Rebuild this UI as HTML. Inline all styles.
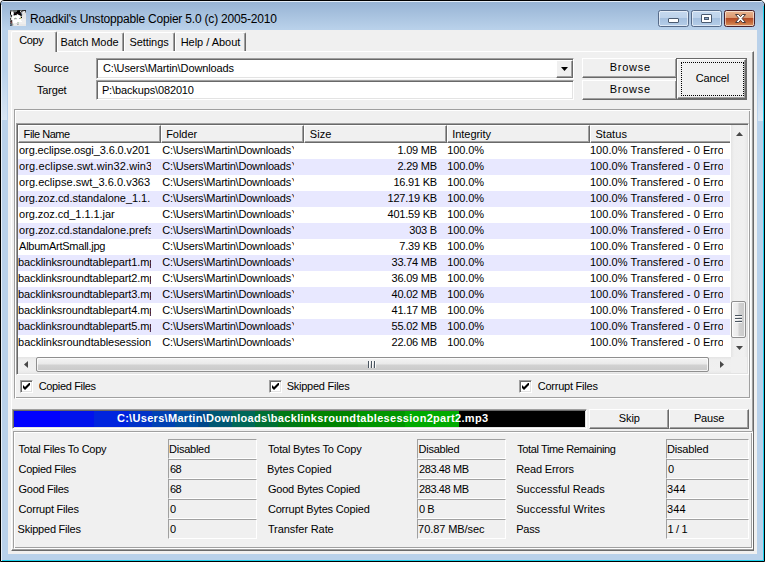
<!DOCTYPE html>
<html>
<head>
<meta charset="utf-8">
<title>Roadkil's Unstoppable Copier 5.0</title>
<style>
html,body{margin:0;padding:0;}
body{width:765px;height:562px;overflow:hidden;background:#fff;position:relative;
 font-family:"Liberation Sans",sans-serif;font-size:11px;color:#000;}
.a{position:absolute;box-sizing:border-box;}
.t{position:absolute;white-space:nowrap;line-height:13px;height:13px;}
#win{left:0;top:0;width:765px;height:562px;background:#b9d1ea;border:1px solid #000;
 border-radius:4px 5px 0 0;overflow:hidden;}
#titlegrad{left:0;top:0;width:763px;height:29px;background:linear-gradient(#98b4d4 0px,#9ab6d6 3px,#b9d1ea 28px);}
#hl{left:0;top:0;width:763px;height:1px;background:#e4edf7;}
#cyan{left:0;top:559px;width:763px;height:1px;background:#1fd2ee;}
#cyan2{left:762px;top:5px;width:1px;height:555px;background:#1fd2ee;}
#lwhite{left:0;top:4px;width:1px;height:556px;background:#e8f0f8;}
.glow{width:5px;background:linear-gradient(rgba(255,255,255,0),rgba(255,255,255,.45));}
#client{left:8px;top:30px;width:749px;height:524px;background:#f0f0f0;}
#title{font-size:12px;line-height:16px;height:16px;}
.cb{top:10px;width:31px;height:17px;border:1px solid #566a88;border-radius:2.5px;
 background:linear-gradient(#c5d9ef 0,#bed3eb 45%,#a5c0df 50%,#b5cde8 100%);box-shadow:inset 0 0 0 1px rgba(255,255,255,.55);}
#cbx{background:linear-gradient(#e9b48f 0,#dc9870 45%,#b54c27 50%,#c56a3a 75%,#dc9560 100%);border-color:#48202a;}
.btn{background:#f0f0f0;border:1px solid;border-color:#fff #696969 #696969 #fff;box-shadow:inset -1px -1px 0 #a0a0a0;}
.sunk{border:1px solid;border-color:#a0a0a0 #fff #fff #a0a0a0;box-shadow:inset 1px 1px 0 #696969, inset -1px -1px 0 #e3e3e3;background:#fff;}
.grp{border:1px solid;border-color:#a0a0a0 #fff #fff #a0a0a0;box-shadow:inset 1px 1px 0 #fff, inset -1px -1px 0 #a0a0a0;}
.val{border:1px solid;border-color:#a0a0a0 #fff #fff #a0a0a0;height:20px;}
.tab{border-left:1px solid #fff;border-top:1px solid #fff;border-right:1px solid #696969;box-shadow:inset -1px 0 0 #a0a0a0;background:#f0f0f0;border-radius:2px 2px 0 0;}
.hd{top:125px;height:18px;background:#f0f0f0;border:1px solid;border-color:#fff #696969 #696969 #fff;box-shadow:inset -1px -1px 0 #a0a0a0;}
.row{left:18px;width:712px;height:16px;}
.clip{position:absolute;overflow:hidden;height:16px;}
.chk{width:13px;height:13px;border:1px solid;border-color:#a0a0a0 #fff #fff #a0a0a0;box-shadow:inset 1px 1px 0 #696969, inset -1px -1px 0 #e3e3e3;background:#fff;}
</style>
</head>
<body>
<div id="win" class="a"><div id="titlegrad" class="a"></div><div id="hl" class="a"></div><div id="cyan" class="a"></div><div id="cyan2" class="a"></div><div id="lwhite" class="a"></div><div class="a glow" style="left:1px;top:68px;height:51px"></div><div class="a glow" style="left:757px;top:69px;height:51px"></div></div>
<svg class="a" style="left:10px;top:10px" width="16" height="16" viewBox="0 0 16 16" shape-rendering="crispEdges"><rect x="0" y="0" width="1" height="1" fill="#56626c"/><rect x="1" y="0" width="1" height="1" fill="#6a7074"/><rect x="2" y="0" width="1" height="1" fill="#787d82"/><rect x="3" y="0" width="4" height="1" fill="#5e6868"/><rect x="7" y="0" width="1" height="1" fill="#2a2a2a"/><rect x="8" y="0" width="2" height="1" fill="#111"/><rect x="10" y="0" width="1" height="1" fill="#5a5a5a"/><rect x="11" y="0" width="1" height="1" fill="#6a6a6a"/><rect x="12" y="0" width="2" height="1" fill="#2c2c2c"/><rect x="14" y="0" width="2" height="1" fill="#222"/><rect x="0" y="1" width="1" height="1" fill="#444"/><rect x="1" y="1" width="1" height="1" fill="#a4a4a4"/><rect x="2" y="1" width="1" height="1" fill="#b4b4b4"/><rect x="3" y="1" width="1" height="1" fill="#808484"/><rect x="4" y="1" width="2" height="1" fill="#6e7474"/><rect x="6" y="1" width="1" height="1" fill="#6a6a6a"/><rect x="7" y="1" width="3" height="1" fill="#000"/><rect x="10" y="1" width="1" height="1" fill="#d0d0d0"/><rect x="11" y="1" width="1" height="1" fill="#444"/><rect x="12" y="1" width="1" height="1" fill="#808080"/><rect x="13" y="1" width="1" height="1" fill="#c4c4c4"/><rect x="14" y="1" width="1" height="1" fill="#e8e8e8"/><rect x="15" y="1" width="1" height="1" fill="#555"/><rect x="0" y="2" width="1" height="1" fill="#000"/><rect x="1" y="2" width="1" height="1" fill="#eee"/><rect x="2" y="2" width="1" height="1" fill="#fff"/><rect x="3" y="2" width="1" height="1" fill="#aaa"/><rect x="4" y="2" width="2" height="1" fill="#333"/><rect x="6" y="2" width="4" height="1" fill="#000"/><rect x="10" y="2" width="1" height="1" fill="#333"/><rect x="11" y="2" width="1" height="1" fill="#999"/><rect x="12" y="2" width="1" height="1" fill="#ccc"/><rect x="13" y="2" width="1" height="1" fill="#f4f4f4"/><rect x="14" y="2" width="1" height="1" fill="#ddd"/><rect x="15" y="2" width="1" height="1" fill="#999"/><rect x="0" y="3" width="1" height="1" fill="#000"/><rect x="1" y="3" width="2" height="1" fill="#fff"/><rect x="3" y="3" width="1" height="1" fill="#ccc"/><rect x="4" y="3" width="7" height="1" fill="#1a0a10"/><rect x="11" y="3" width="1" height="1" fill="#678"/><rect x="12" y="3" width="1" height="1" fill="#ddd"/><rect x="13" y="3" width="3" height="1" fill="#e0e0e0"/><rect x="0" y="4" width="1" height="1" fill="#333"/><rect x="1" y="4" width="1" height="1" fill="#ddd"/><rect x="2" y="4" width="1" height="1" fill="#fff"/><rect x="3" y="4" width="1" height="1" fill="#89a"/><rect x="4" y="4" width="2" height="1" fill="#000"/><rect x="6" y="4" width="1" height="1" fill="#333"/><rect x="7" y="4" width="1" height="1" fill="#ccc"/><rect x="8" y="4" width="1" height="1" fill="#444"/><rect x="9" y="4" width="2" height="1" fill="#000"/><rect x="11" y="4" width="1" height="1" fill="#345"/><rect x="12" y="4" width="1" height="1" fill="#ccc"/><rect x="13" y="4" width="3" height="1" fill="#e4e4e4"/><rect x="0" y="5" width="1" height="1" fill="#888"/><rect x="1" y="5" width="1" height="1" fill="#333"/><rect x="2" y="5" width="1" height="1" fill="#ddd"/><rect x="3" y="5" width="1" height="1" fill="#ccc"/><rect x="4" y="5" width="1" height="1" fill="#999"/><rect x="5" y="5" width="2" height="1" fill="#ddd"/><rect x="7" y="5" width="2" height="1" fill="#fff"/><rect x="9" y="5" width="1" height="1" fill="#ccc"/><rect x="10" y="5" width="1" height="1" fill="#444"/><rect x="11" y="5" width="1" height="1" fill="#333"/><rect x="12" y="5" width="1" height="1" fill="#ddd"/><rect x="13" y="5" width="3" height="1" fill="#e8e8e8"/><rect x="0" y="6" width="1" height="1" fill="#9ab"/><rect x="1" y="6" width="1" height="1" fill="#444"/><rect x="2" y="6" width="1" height="1" fill="#eee"/><rect x="3" y="6" width="7" height="1" fill="#fff"/><rect x="10" y="6" width="1" height="1" fill="#ccc"/><rect x="11" y="6" width="1" height="1" fill="#999"/><rect x="12" y="6" width="4" height="1" fill="#e8e8e8"/><rect x="0" y="7" width="1" height="1" fill="#bbb"/><rect x="1" y="7" width="1" height="1" fill="#ccc"/><rect x="2" y="7" width="3" height="1" fill="#fff"/><rect x="5" y="7" width="1" height="1" fill="#dfd"/><rect x="6" y="7" width="4" height="1" fill="#fff"/><rect x="10" y="7" width="1" height="1" fill="#d4d49a"/><rect x="11" y="7" width="1" height="1" fill="#000"/><rect x="12" y="7" width="1" height="1" fill="#eee"/><rect x="13" y="7" width="3" height="1" fill="#e8e8e8"/><rect x="0" y="8" width="1" height="1" fill="#444"/><rect x="1" y="8" width="1" height="1" fill="#ddd"/><rect x="2" y="8" width="2" height="1" fill="#fff"/><rect x="4" y="8" width="1" height="1" fill="#aaa"/><rect x="5" y="8" width="1" height="1" fill="#9aa294"/><rect x="6" y="8" width="1" height="1" fill="#bbb"/><rect x="7" y="8" width="2" height="1" fill="#fff"/><rect x="9" y="8" width="1" height="1" fill="#99a"/><rect x="10" y="8" width="1" height="1" fill="#c4c468"/><rect x="11" y="8" width="1" height="1" fill="#ddd"/><rect x="12" y="8" width="4" height="1" fill="#e8e8e8"/><rect x="0" y="9" width="1" height="1" fill="#555"/><rect x="1" y="9" width="1" height="1" fill="#ddd"/><rect x="2" y="9" width="2" height="1" fill="#fff"/><rect x="4" y="9" width="1" height="1" fill="#ddd"/><rect x="5" y="9" width="2" height="1" fill="#eee"/><rect x="7" y="9" width="4" height="1" fill="#fff"/><rect x="11" y="9" width="5" height="1" fill="#eee"/><rect x="0" y="10" width="1" height="1" fill="#777"/><rect x="1" y="10" width="1" height="1" fill="#444"/><rect x="2" y="10" width="1" height="1" fill="#ccc"/><rect x="3" y="10" width="8" height="1" fill="#fff"/><rect x="11" y="10" width="5" height="1" fill="#eee"/><rect x="0" y="11" width="1" height="1" fill="#444"/><rect x="1" y="11" width="1" height="1" fill="#4a2a2a"/><rect x="2" y="11" width="1" height="1" fill="#ccc"/><rect x="3" y="11" width="9" height="1" fill="#fff"/><rect x="12" y="11" width="4" height="1" fill="#eee"/><rect x="0" y="12" width="1" height="1" fill="#667"/><rect x="1" y="12" width="1" height="1" fill="#8a4444"/><rect x="2" y="12" width="1" height="1" fill="#bbb"/><rect x="3" y="12" width="4" height="1" fill="#fff"/><rect x="7" y="12" width="1" height="1" fill="#ccc"/><rect x="8" y="12" width="1" height="1" fill="#bdb"/><rect x="9" y="12" width="7" height="1" fill="#eee"/><rect x="0" y="13" width="1" height="1" fill="#555"/><rect x="1" y="13" width="1" height="1" fill="#666"/><rect x="2" y="13" width="1" height="1" fill="#aaa"/><rect x="3" y="13" width="3" height="1" fill="#eee"/><rect x="6" y="13" width="1" height="1" fill="#ddd"/><rect x="7" y="13" width="2" height="1" fill="#ccc"/><rect x="9" y="13" width="7" height="1" fill="#eee"/><rect x="0" y="14" width="1" height="1" fill="#678"/><rect x="1" y="14" width="1" height="1" fill="#567"/><rect x="2" y="14" width="1" height="1" fill="#999"/><rect x="3" y="14" width="1" height="1" fill="#cdc"/><rect x="4" y="14" width="3" height="1" fill="#eee"/><rect x="7" y="14" width="1" height="1" fill="#aaa"/><rect x="8" y="14" width="1" height="1" fill="#bbb"/><rect x="9" y="14" width="1" height="1" fill="#eee"/><rect x="10" y="14" width="6" height="1" fill="#e8e8e8"/><rect x="0" y="15" width="1" height="1" fill="#456"/><rect x="1" y="15" width="1" height="1" fill="#567"/><rect x="2" y="15" width="1" height="1" fill="#aaa"/><rect x="3" y="15" width="1" height="1" fill="#ddd"/><rect x="4" y="15" width="12" height="1" fill="#e8e8e8"/></svg>
<div class="t" id="title" style="left:30.00px;top:11px;letter-spacing:-0.198px;">Roadkil's Unstoppable Copier 5.0 (c) 2005-2010</div>
<div class="a cb" style="left:658px"><div class="a" style="left:9px;top:7px;width:11px;height:5px;background:#fff;border:1px solid #4a5a70;border-radius:1px"></div></div>
<div class="a cb" style="left:691px"><div class="a" style="left:9px;top:3px;width:11px;height:9px;background:#fff;border:1px solid #4a5a70;border-radius:1px"></div><div class="a" style="left:12px;top:6px;width:5px;height:3px;background:#8aa4c4;border:1px solid #4a5a70"></div></div>
<div class="a cb" id="cbx" style="left:724px"><svg class="a" style="left:8.5px;top:2px" width="13" height="11" viewBox="0 0 13 11"><path d="M1.5 1.5h3.1l1.9 2.2 1.9-2.2h3.1l-3.4 4 3.4 4h-3.1l-1.9-2.2-1.9 2.2h-3.1l3.4-4z" fill="#fff" stroke="#4a3a3a" stroke-width="1"/></svg></div>
<div id="client" class="a"></div>
<div class="a" style="left:11px;top:51px;width:743px;height:500px;border:1px solid;border-color:#fff #696969 #696969 #fff;box-shadow:inset -1px -1px 0 #a0a0a0"></div>
<div class="a tab" style="left:57px;top:32px;width:67px;height:19px"></div>
<div class="a tab" style="left:124px;top:32px;width:51px;height:19px"></div>
<div class="a tab" style="left:175px;top:32px;width:71px;height:19px"></div>
<div class="a tab" style="left:11px;top:31px;width:46px;height:21px"></div>
<div class="t" style="left:19.30px;top:34px;letter-spacing:-0.433px;">Copy</div>
<div class="t" style="left:60.40px;top:36px;letter-spacing:-0.056px;">Batch Mode</div>
<div class="t" style="left:129.40px;top:36px;letter-spacing:-0.057px;">Settings</div>
<div class="t" style="left:180.70px;top:36px;letter-spacing:-0.027px;">Help / About</div>
<div class="t" style="left:33.80px;top:62px;letter-spacing:0.020px;">Source</div>
<div class="t" style="left:37.00px;top:84px;letter-spacing:-0.180px;">Target</div>
<div class="a sunk" style="left:96px;top:58px;width:478px;height:21px"><div class="a btn" style="left:459px;top:1px;width:17px;height:18px"><svg class="a" style="left:4px;top:6px" width="7" height="4" viewBox="0 0 7 4"><path d="M0 0h7l-3.5 4z" fill="#000"/></svg></div></div>
<div class="t" style="left:102.90px;top:62px;letter-spacing:-0.112px;">C:\Users\Martin\Downloads</div>
<div class="a sunk" style="left:96px;top:80px;width:478px;height:20px"></div>
<div class="t" style="left:101.90px;top:84px;letter-spacing:-0.131px;">P:\backups\082010</div>
<div class="a btn" style="left:582px;top:58px;width:95px;height:20px"></div><div class="t" style="left:609.80px;top:61px;letter-spacing:0.720px;">Browse</div>
<div class="a btn" style="left:582px;top:80px;width:95px;height:20px"></div><div class="t" style="left:609.80px;top:83px;letter-spacing:0.720px;">Browse</div>
<div class="a" style="left:676px;top:58px;width:71px;height:42px;border:1px solid #696969;background:#f0f0f0"><div class="a" style="left:0;top:0;width:69px;height:40px;border:1px solid;border-color:#fff #696969 #696969 #fff;box-shadow:inset -1px -1px 0 #a0a0a0"></div><div class="a" style="left:4px;top:3px;width:63px;height:34px;border:1px dotted #000"></div></div>
<div class="t" style="left:695.70px;top:72px;letter-spacing:-0.140px;">Cancel</div>
<div class="a grp" style="left:14px;top:109px;width:737px;height:290px"></div>
<div class="a sunk" style="left:16px;top:123px;width:733px;height:252px"></div>
<div class="a hd" style="left:18px;width:143px"></div>
<div class="t" style="left:23.60px;top:128px;letter-spacing:-0.438px;">File Name</div>
<div class="a hd" style="left:161px;width:143px"></div>
<div class="t" style="left:166.20px;top:128px;letter-spacing:-0.040px;">Folder</div>
<div class="a hd" style="left:304px;width:143px"></div>
<div class="t" style="left:309.80px;top:128px;letter-spacing:0.067px;">Size</div>
<div class="a hd" style="left:447px;width:143px"></div>
<div class="t" style="left:452.30px;top:128px;letter-spacing:-0.062px;">Integrity</div>
<div class="a hd" style="left:590px;width:140px;border-right:none;box-shadow:inset 0 -1px 0 #a0a0a0"></div>
<div class="t" style="left:595.40px;top:128px;letter-spacing:0.060px;">Status</div>
<div class="a row" style="top:143px;background:#fff"><div class="clip" style="left:0;top:0;width:133px"><div class="t" style="left:1.10px;top:1px;letter-spacing:-0.115px;">org.eclipse.osgi_3.6.0.v201</div></div><div class="clip" style="left:143px;top:0;width:133.3px"><div class="t" style="left:1.30px;top:1px;letter-spacing:-0.208px;">C:\Users\Martin\Downloads<span style="display:inline-block;transform:skewX(18deg);transform-origin:0 2px;margin-left:0.6px">\</span></div></div><div class="t" style="right:293.1px;top:1px;letter-spacing:-0.22px">1.09 MB</div><div class="t" style="left:429.20px;top:1px;letter-spacing:-0.100px;">100.0%</div><div class="clip" style="left:572px;top:0;width:133.4px"><div class="t" style="left:-0.10px;top:1px;letter-spacing:0.052px;">100.0% Transfered - 0 Errors</div></div></div>
<div class="a row" style="top:159px;background:#e8e8ff"><div class="clip" style="left:0;top:0;width:133px"><div class="t" style="left:1.10px;top:1px;letter-spacing:0.112px;">org.eclipse.swt.win32.win32</div></div><div class="clip" style="left:143px;top:0;width:133.3px"><div class="t" style="left:1.30px;top:1px;letter-spacing:-0.208px;">C:\Users\Martin\Downloads<span style="display:inline-block;transform:skewX(18deg);transform-origin:0 2px;margin-left:0.6px">\</span></div></div><div class="t" style="right:293.1px;top:1px;letter-spacing:-0.22px">2.29 MB</div><div class="t" style="left:429.20px;top:1px;letter-spacing:-0.100px;">100.0%</div><div class="clip" style="left:572px;top:0;width:133.4px"><div class="t" style="left:-0.10px;top:1px;letter-spacing:0.052px;">100.0% Transfered - 0 Errors</div></div></div>
<div class="a row" style="top:175px;background:#fff"><div class="clip" style="left:0;top:0;width:133px"><div class="t" style="left:1.10px;top:1px;letter-spacing:0.032px;">org.eclipse.swt_3.6.0.v363</div></div><div class="clip" style="left:143px;top:0;width:133.3px"><div class="t" style="left:1.30px;top:1px;letter-spacing:-0.208px;">C:\Users\Martin\Downloads<span style="display:inline-block;transform:skewX(18deg);transform-origin:0 2px;margin-left:0.6px">\</span></div></div><div class="t" style="right:293.1px;top:1px;letter-spacing:-0.22px">16.91 KB</div><div class="t" style="left:429.20px;top:1px;letter-spacing:-0.100px;">100.0%</div><div class="clip" style="left:572px;top:0;width:133.4px"><div class="t" style="left:-0.10px;top:1px;letter-spacing:0.052px;">100.0% Transfered - 0 Errors</div></div></div>
<div class="a row" style="top:191px;background:#e8e8ff"><div class="clip" style="left:0;top:0;width:133px"><div class="t" style="left:1.10px;top:1px;letter-spacing:-0.040px;">org.zoz.cd.standalone_1.1.</div></div><div class="clip" style="left:143px;top:0;width:133.3px"><div class="t" style="left:1.30px;top:1px;letter-spacing:-0.208px;">C:\Users\Martin\Downloads<span style="display:inline-block;transform:skewX(18deg);transform-origin:0 2px;margin-left:0.6px">\</span></div></div><div class="t" style="right:293.1px;top:1px;letter-spacing:-0.22px">127.19 KB</div><div class="t" style="left:429.20px;top:1px;letter-spacing:-0.100px;">100.0%</div><div class="clip" style="left:572px;top:0;width:133.4px"><div class="t" style="left:-0.10px;top:1px;letter-spacing:0.052px;">100.0% Transfered - 0 Errors</div></div></div>
<div class="a row" style="top:207px;background:#fff"><div class="clip" style="left:0;top:0;width:133px"><div class="t" style="left:1.10px;top:1px;letter-spacing:-0.058px;">org.zoz.cd_1.1.1.jar</div></div><div class="clip" style="left:143px;top:0;width:133.3px"><div class="t" style="left:1.30px;top:1px;letter-spacing:-0.208px;">C:\Users\Martin\Downloads<span style="display:inline-block;transform:skewX(18deg);transform-origin:0 2px;margin-left:0.6px">\</span></div></div><div class="t" style="right:293.1px;top:1px;letter-spacing:-0.22px">401.59 KB</div><div class="t" style="left:429.20px;top:1px;letter-spacing:-0.100px;">100.0%</div><div class="clip" style="left:572px;top:0;width:133.4px"><div class="t" style="left:-0.10px;top:1px;letter-spacing:0.052px;">100.0% Transfered - 0 Errors</div></div></div>
<div class="a row" style="top:223px;background:#e8e8ff"><div class="clip" style="left:0;top:0;width:133px"><div class="t" style="left:1.10px;top:1px;letter-spacing:-0.036px;">org.zoz.cd.standalone.prefs</div></div><div class="clip" style="left:143px;top:0;width:133.3px"><div class="t" style="left:1.30px;top:1px;letter-spacing:-0.208px;">C:\Users\Martin\Downloads<span style="display:inline-block;transform:skewX(18deg);transform-origin:0 2px;margin-left:0.6px">\</span></div></div><div class="t" style="right:293.1px;top:1px;letter-spacing:-0.22px">303 B</div><div class="t" style="left:429.20px;top:1px;letter-spacing:-0.100px;">100.0%</div><div class="clip" style="left:572px;top:0;width:133.4px"><div class="t" style="left:-0.10px;top:1px;letter-spacing:0.052px;">100.0% Transfered - 0 Errors</div></div></div>
<div class="a row" style="top:239px;background:#fff"><div class="clip" style="left:0;top:0;width:133px"><div class="t" style="left:1.10px;top:1px;letter-spacing:-0.256px;">AlbumArtSmall.jpg</div></div><div class="clip" style="left:143px;top:0;width:133.3px"><div class="t" style="left:1.30px;top:1px;letter-spacing:-0.208px;">C:\Users\Martin\Downloads<span style="display:inline-block;transform:skewX(18deg);transform-origin:0 2px;margin-left:0.6px">\</span></div></div><div class="t" style="right:293.1px;top:1px;letter-spacing:-0.22px">7.39 KB</div><div class="t" style="left:429.20px;top:1px;letter-spacing:-0.100px;">100.0%</div><div class="clip" style="left:572px;top:0;width:133.4px"><div class="t" style="left:-0.10px;top:1px;letter-spacing:0.052px;">100.0% Transfered - 0 Errors</div></div></div>
<div class="a row" style="top:255px;background:#e8e8ff"><div class="clip" style="left:0;top:0;width:133px"><div class="t" style="left:0.10px;top:1px;letter-spacing:-0.132px;">backlinksroundtablepart1.mp3</div></div><div class="clip" style="left:143px;top:0;width:133.3px"><div class="t" style="left:1.30px;top:1px;letter-spacing:-0.208px;">C:\Users\Martin\Downloads<span style="display:inline-block;transform:skewX(18deg);transform-origin:0 2px;margin-left:0.6px">\</span></div></div><div class="t" style="right:293.1px;top:1px;letter-spacing:-0.22px">33.74 MB</div><div class="t" style="left:429.20px;top:1px;letter-spacing:-0.100px;">100.0%</div><div class="clip" style="left:572px;top:0;width:133.4px"><div class="t" style="left:-0.10px;top:1px;letter-spacing:0.052px;">100.0% Transfered - 0 Errors</div></div></div>
<div class="a row" style="top:271px;background:#fff"><div class="clip" style="left:0;top:0;width:133px"><div class="t" style="left:0.10px;top:1px;letter-spacing:-0.132px;">backlinksroundtablepart2.mp3</div></div><div class="clip" style="left:143px;top:0;width:133.3px"><div class="t" style="left:1.30px;top:1px;letter-spacing:-0.208px;">C:\Users\Martin\Downloads<span style="display:inline-block;transform:skewX(18deg);transform-origin:0 2px;margin-left:0.6px">\</span></div></div><div class="t" style="right:293.1px;top:1px;letter-spacing:-0.22px">36.09 MB</div><div class="t" style="left:429.20px;top:1px;letter-spacing:-0.100px;">100.0%</div><div class="clip" style="left:572px;top:0;width:133.4px"><div class="t" style="left:-0.10px;top:1px;letter-spacing:0.052px;">100.0% Transfered - 0 Errors</div></div></div>
<div class="a row" style="top:287px;background:#e8e8ff"><div class="clip" style="left:0;top:0;width:133px"><div class="t" style="left:0.10px;top:1px;letter-spacing:-0.132px;">backlinksroundtablepart3.mp3</div></div><div class="clip" style="left:143px;top:0;width:133.3px"><div class="t" style="left:1.30px;top:1px;letter-spacing:-0.208px;">C:\Users\Martin\Downloads<span style="display:inline-block;transform:skewX(18deg);transform-origin:0 2px;margin-left:0.6px">\</span></div></div><div class="t" style="right:293.1px;top:1px;letter-spacing:-0.22px">40.02 MB</div><div class="t" style="left:429.20px;top:1px;letter-spacing:-0.100px;">100.0%</div><div class="clip" style="left:572px;top:0;width:133.4px"><div class="t" style="left:-0.10px;top:1px;letter-spacing:0.052px;">100.0% Transfered - 0 Errors</div></div></div>
<div class="a row" style="top:303px;background:#fff"><div class="clip" style="left:0;top:0;width:133px"><div class="t" style="left:0.10px;top:1px;letter-spacing:-0.132px;">backlinksroundtablepart4.mp3</div></div><div class="clip" style="left:143px;top:0;width:133.3px"><div class="t" style="left:1.30px;top:1px;letter-spacing:-0.208px;">C:\Users\Martin\Downloads<span style="display:inline-block;transform:skewX(18deg);transform-origin:0 2px;margin-left:0.6px">\</span></div></div><div class="t" style="right:293.1px;top:1px;letter-spacing:-0.22px">41.17 MB</div><div class="t" style="left:429.20px;top:1px;letter-spacing:-0.100px;">100.0%</div><div class="clip" style="left:572px;top:0;width:133.4px"><div class="t" style="left:-0.10px;top:1px;letter-spacing:0.052px;">100.0% Transfered - 0 Errors</div></div></div>
<div class="a row" style="top:319px;background:#e8e8ff"><div class="clip" style="left:0;top:0;width:133px"><div class="t" style="left:0.10px;top:1px;letter-spacing:-0.132px;">backlinksroundtablepart5.mp3</div></div><div class="clip" style="left:143px;top:0;width:133.3px"><div class="t" style="left:1.30px;top:1px;letter-spacing:-0.208px;">C:\Users\Martin\Downloads<span style="display:inline-block;transform:skewX(18deg);transform-origin:0 2px;margin-left:0.6px">\</span></div></div><div class="t" style="right:293.1px;top:1px;letter-spacing:-0.22px">55.02 MB</div><div class="t" style="left:429.20px;top:1px;letter-spacing:-0.100px;">100.0%</div><div class="clip" style="left:572px;top:0;width:133.4px"><div class="t" style="left:-0.10px;top:1px;letter-spacing:0.052px;">100.0% Transfered - 0 Errors</div></div></div>
<div class="a row" style="top:335px;background:#fff"><div class="clip" style="left:0;top:0;width:133px"><div class="t" style="left:0.10px;top:1px;letter-spacing:-0.060px;">backlinksroundtablesession</div></div><div class="clip" style="left:143px;top:0;width:133.3px"><div class="t" style="left:1.30px;top:1px;letter-spacing:-0.208px;">C:\Users\Martin\Downloads<span style="display:inline-block;transform:skewX(18deg);transform-origin:0 2px;margin-left:0.6px">\</span></div></div><div class="t" style="right:293.1px;top:1px;letter-spacing:-0.22px">22.06 MB</div><div class="t" style="left:429.20px;top:1px;letter-spacing:-0.100px;">100.0%</div><div class="clip" style="left:572px;top:0;width:133.4px"><div class="t" style="left:-0.10px;top:1px;letter-spacing:0.052px;">100.0% Transfered - 0 Errors</div></div></div>
<div class="a" style="left:731px;top:125px;width:16px;height:232px;background:linear-gradient(90deg,#e4e4e4,#efefef 3px,#f0f0f0 13px,#e9e9e9)"></div>
<svg class="a" style="left:736px;top:132px" width="7" height="4" viewBox="0 0 7 4"><path d="M0 4h7l-3.5-4z" fill="#484848"/></svg>
<svg class="a" style="left:736px;top:346px" width="7" height="4" viewBox="0 0 7 4"><path d="M0 0h7l-3.5 4z" fill="#484848"/></svg>
<div class="a" style="left:731px;top:301px;width:15px;height:37px;border:1px solid #8f8f8f;border-radius:2px;background:linear-gradient(90deg,#f4f4f4,#e9e9e9 48%,#d2d2d2 52%,#c9c9c9);box-shadow:inset 0 0 0 1px rgba(255,255,255,.75)"><div class="a" style="left:3px;top:13px;width:7px;height:2px;background:linear-gradient(#4a5560 50%,#fafafa 50%)"></div><div class="a" style="left:3px;top:16px;width:7px;height:2px;background:linear-gradient(#4a5560 50%,#fafafa 50%)"></div><div class="a" style="left:3px;top:19px;width:7px;height:2px;background:linear-gradient(#4a5560 50%,#fafafa 50%)"></div></div>
<div class="a" style="left:18px;top:357px;width:713px;height:16px;background:linear-gradient(#e4e4e4,#efefef 3px,#f0f0f0 13px,#e9e9e9)"></div>
<div class="a" style="left:731px;top:357px;width:16px;height:16px;background:#f0f0f0"></div>
<svg class="a" style="left:24px;top:361px" width="4" height="7" viewBox="0 0 4 7"><path d="M4 0v7l-4-3.5z" fill="#484848"/></svg>
<svg class="a" style="left:720px;top:361px" width="4" height="7" viewBox="0 0 4 7"><path d="M0 0v7l4-3.5z" fill="#484848"/></svg>
<div class="a" style="left:36px;top:357px;width:673px;height:15px;border:1px solid #8f8f8f;border-radius:2px;background:linear-gradient(#f4f4f4,#e9e9e9 48%,#d2d2d2 52%,#c9c9c9);box-shadow:inset 0 0 0 1px rgba(255,255,255,.75)"><div class="a" style="left:331px;top:3px;width:2px;height:7px;background:linear-gradient(90deg,#4a5560 50%,#fafafa 50%)"></div><div class="a" style="left:334px;top:3px;width:2px;height:7px;background:linear-gradient(90deg,#4a5560 50%,#fafafa 50%)"></div><div class="a" style="left:337px;top:3px;width:2px;height:7px;background:linear-gradient(90deg,#4a5560 50%,#fafafa 50%)"></div></div>
<div class="a chk" style="left:20px;top:380px"><svg class="a" style="left:2px;top:2px" width="7" height="7" viewBox="0 0 7 7"><path d="M0 2v3l2 2 5-5v-3l-5 5z" fill="#000"/></svg></div><div class="t" style="left:38.70px;top:380px;letter-spacing:-0.345px;">Copied Files</div>
<div class="a chk" style="left:269px;top:380px"><svg class="a" style="left:2px;top:2px" width="7" height="7" viewBox="0 0 7 7"><path d="M0 2v3l2 2 5-5v-3l-5 5z" fill="#000"/></svg></div><div class="t" style="left:286.70px;top:380px;letter-spacing:-0.250px;">Skipped Files</div>
<div class="a chk" style="left:519px;top:380px"><svg class="a" style="left:2px;top:2px" width="7" height="7" viewBox="0 0 7 7"><path d="M0 2v3l2 2 5-5v-3l-5 5z" fill="#000"/></svg></div><div class="t" style="left:537.70px;top:380px;letter-spacing:-0.225px;">Corrupt Files</div>
<div class="a" style="left:12px;top:409px;width:575px;height:20px;border:1px solid;border-color:#a0a0a0 #fff #fff #a0a0a0;box-shadow:inset 1px 1px 0 #696969, inset -1px -1px 0 #e3e3e3;background:#000"><div class="a" style="left:1px;top:1px;width:445px;height:16px;background:linear-gradient(90deg,rgb(0,0,255) 0px,rgb(0,0,255) 46px,rgb(0,18,237) 46px,rgb(0,18,237) 80px,rgb(0,36,222) 80px,rgb(0,36,222) 115px,rgb(0,50,200) 115px,rgb(0,50,200) 138px,rgb(0,65,180) 138px,rgb(0,65,180) 161px,rgb(0,78,158) 161px,rgb(0,78,158) 184px,rgb(0,72,138) 184px,rgb(0,72,138) 195px,rgb(0,88,115) 195px,rgb(0,88,115) 218px,rgb(0,104,88) 218px,rgb(0,104,88) 241px,rgb(0,112,52) 241px,rgb(0,112,52) 264px,rgb(0,122,20) 264px,rgb(0,122,20) 287px,rgb(0,132,0) 287px,rgb(0,132,0) 344px,rgb(0,150,0) 344px,rgb(0,150,0) 391px,rgb(0,170,0) 391px,rgb(0,170,0) 445px)"></div></div>
<div class="t" style="left:116.90px;top:412px;letter-spacing:0.303px;color:#fff;font-weight:bold;">C:\Users\Martin\Downloads\backlinksroundtablesession2part2.mp3</div>
<div class="a btn" style="left:589px;top:409px;width:80px;height:20px"></div><div class="t" style="left:618.70px;top:412px;letter-spacing:-0.033px;">Skip</div>
<div class="a btn" style="left:669px;top:409px;width:80px;height:20px"></div><div class="t" style="left:693.90px;top:412px;letter-spacing:-0.150px;">Pause</div>
<div class="a grp" style="left:13px;top:431px;width:740px;height:118px"></div>
<div class="t" style="left:18.60px;top:443px;letter-spacing:-0.267px;">Total Files To Copy</div><div class="a val" style="left:168px;top:439px;width:89px"></div><div class="t" style="left:169.10px;top:443px;letter-spacing:-0.257px;">Disabled</div>
<div class="t" style="left:18.60px;top:463px;letter-spacing:-0.309px;">Copied Files</div><div class="a val" style="left:168px;top:459px;width:89px"></div><div class="t" style="left:170.10px;top:463px;letter-spacing:-0.800px;">68</div>
<div class="t" style="left:18.60px;top:483px;letter-spacing:-0.311px;">Good Files</div><div class="a val" style="left:168px;top:479px;width:89px"></div><div class="t" style="left:170.10px;top:483px;letter-spacing:-0.800px;">68</div>
<div class="t" style="left:18.60px;top:503px;letter-spacing:-0.217px;">Corrupt Files</div><div class="a val" style="left:168px;top:499px;width:89px"></div><div class="t" style="left:170.10px;top:503px;letter-spacing:0.000px;">0</div>
<div class="t" style="left:17.60px;top:523px;letter-spacing:-0.225px;">Skipped Files</div><div class="a val" style="left:168px;top:519px;width:89px"></div><div class="t" style="left:170.10px;top:523px;letter-spacing:0.000px;">0</div>
<div class="t" style="left:267.90px;top:443px;letter-spacing:-0.178px;">Total Bytes To Copy</div><div class="a val" style="left:417px;top:439px;width:89px"></div><div class="t" style="left:418.60px;top:443px;letter-spacing:-0.257px;">Disabled</div>
<div class="t" style="left:266.90px;top:463px;letter-spacing:-0.064px;">Bytes Copied</div><div class="a val" style="left:417px;top:459px;width:89px"></div><div class="t" style="left:419.10px;top:463px;letter-spacing:-0.413px;">283.48 MB</div>
<div class="t" style="left:267.90px;top:483px;letter-spacing:-0.194px;">Good Bytes Copied</div><div class="a val" style="left:417px;top:479px;width:89px"></div><div class="t" style="left:419.10px;top:483px;letter-spacing:-0.413px;">283.48 MB</div>
<div class="t" style="left:267.90px;top:503px;letter-spacing:-0.168px;">Corrupt Bytes Copied</div><div class="a val" style="left:417px;top:499px;width:89px"></div><div class="t" style="left:419.10px;top:503px;letter-spacing:-0.550px;">0 B</div>
<div class="t" style="left:267.90px;top:523px;letter-spacing:-0.083px;">Transfer Rate</div><div class="a val" style="left:417px;top:519px;width:89px"></div><div class="t" style="left:418.10px;top:523px;letter-spacing:-0.082px;">70.87 MB/sec</div>
<div class="t" style="left:517.20px;top:443px;letter-spacing:-0.374px;">Total Time Remaining</div><div class="a val" style="left:666px;top:439px;width:83px"></div><div class="t" style="left:667.00px;top:443px;letter-spacing:-0.171px;">Disabled</div>
<div class="t" style="left:516.20px;top:463px;letter-spacing:-0.140px;">Read Errors</div><div class="a val" style="left:666px;top:459px;width:83px"></div><div class="t" style="left:668.00px;top:463px;letter-spacing:0.000px;">0</div>
<div class="t" style="left:516.20px;top:483px;letter-spacing:0.033px;">Successful Reads</div><div class="a val" style="left:666px;top:479px;width:83px"></div><div class="t" style="left:667.00px;top:483px;letter-spacing:0.100px;">344</div>
<div class="t" style="left:516.20px;top:503px;letter-spacing:0.094px;">Successful Writes</div><div class="a val" style="left:666px;top:499px;width:83px"></div><div class="t" style="left:667.00px;top:503px;letter-spacing:0.100px;">344</div>
<div class="t" style="left:516.20px;top:523px;letter-spacing:-0.200px;">Pass</div><div class="a val" style="left:666px;top:519px;width:83px"></div><div class="t" style="left:667.50px;top:523px;letter-spacing:-0.350px;">1 / 1</div>
</body>
</html>
